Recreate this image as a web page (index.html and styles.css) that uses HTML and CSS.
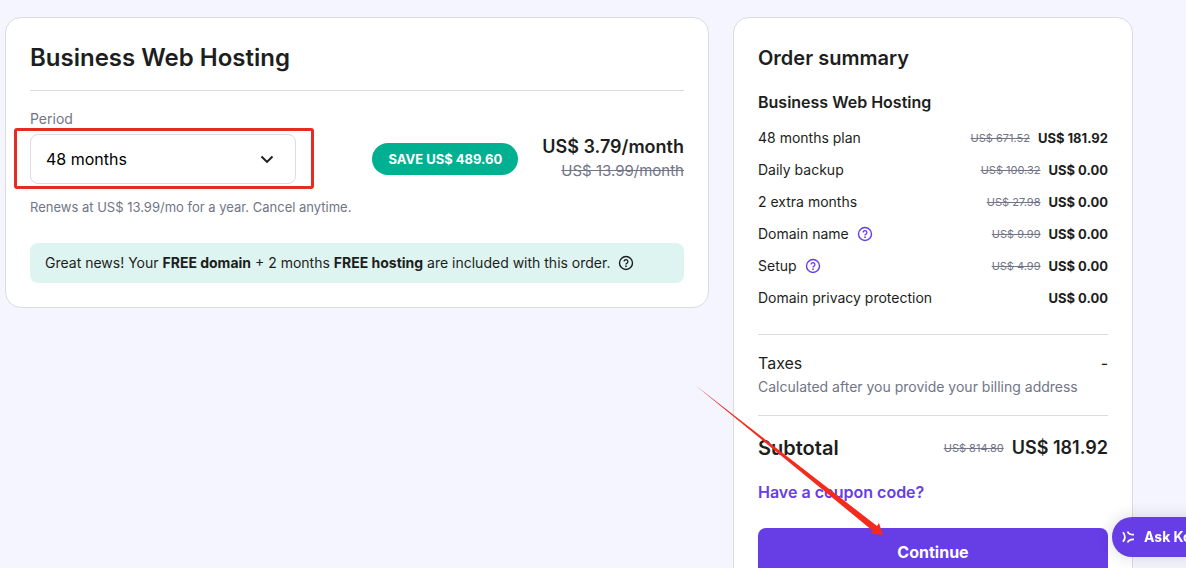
FILE: index.html
```html
<!DOCTYPE html>
<html lang="en">
<head>
<meta charset="utf-8">
<meta name="viewport" content="width=device-width, initial-scale=1">
<title>Business Web Hosting – Checkout</title>
<link rel="stylesheet" href="styles.css">
</head>
<body>
<svg class="symbols" aria-hidden="true">
  <symbol id="help" viewBox="0 0 16 16">
    <circle cx="8" cy="8" r="6.5" fill="none" stroke="currentColor" stroke-width="1.4"/>
    <path d="M6.100 6.500a1.900 1.900 0 1 1 2.900 1.600c-.7.4-1 .7-1 1.300" fill="none" stroke="currentColor" stroke-width="1.3"/>
    <circle cx="8" cy="11.2" r=".85" fill="currentColor"/>
  </symbol>
</svg>
<main class="checkout">
  <section class="card plan">
    <h1 class="plan-title">Business Web Hosting</h1>
    <label class="period-label" for="period">Period</label>
    <div class="period-row">
      <div class="period-field">
        <select class="period-select" id="period">
          <option>48 months</option>
          <option>24 months</option>
          <option>12 months</option>
          <option>1 month</option>
        </select>
        <svg class="chevron" viewBox="0 0 24 24" aria-hidden="true"><path d="M6 9.200l6 6 6-6" fill="none" stroke="currentColor" stroke-width="2.2"/></svg>
        <div class="highlight"></div>
      </div>
      <span class="save">SAVE US$ 489.60</span>
      <div class="price">
        <strong class="price-now">US$ 3.79/month</strong>
        <s class="price-old">US$ 13.99/month</s>
      </div>
    </div>
    <p class="renew">Renews at US$ 13.99/mo for a year. Cancel anytime.</p>
    <div class="notice">
      <p class="notice-text">Great news! Your <b>FREE domain</b> + 2 months <b>FREE hosting</b> are included with this order.</p>
      <button class="help" type="button" aria-label="About free domain"><svg class="help-icon"><use href="#help"/></svg></button>
    </div>
  </section>

  <aside class="card summary">
    <h2 class="summary-title">Order summary</h2>
    <h3 class="summary-plan">Business Web Hosting</h3>
    <ul class="items">
      <li class="item"><span class="item-name">48 months plan</span><s class="old">US$ 671.52</s><b class="amount">US$ 181.92</b></li>
      <li class="item"><span class="item-name">Daily backup</span><s class="old">US$ 100.32</s><b class="amount">US$ 0.00</b></li>
      <li class="item"><span class="item-name">2 extra months</span><s class="old">US$ 27.98</s><b class="amount">US$ 0.00</b></li>
      <li class="item"><span class="item-name">Domain name <button class="help violet" type="button" aria-label="About domain name"><svg class="help-icon"><use href="#help"/></svg></button></span><s class="old">US$ 9.99</s><b class="amount">US$ 0.00</b></li>
      <li class="item"><span class="item-name">Setup <button class="help violet" type="button" aria-label="About setup"><svg class="help-icon"><use href="#help"/></svg></button></span><s class="old">US$ 4.99</s><b class="amount">US$ 0.00</b></li>
      <li class="item"><span class="item-name">Domain privacy protection</span><b class="amount">US$ 0.00</b></li>
    </ul>
    <div class="taxes">
      <div class="taxes-row"><span>Taxes</span><span>-</span></div>
      <p class="taxes-note">Calculated after you provide your billing address</p>
    </div>
    <div class="subtotal">
      <span class="subtotal-label">Subtotal</span><s class="old">US$ 814.80</s><strong class="total">US$ 181.92</strong>
    </div>
    <a class="coupon" href="#coupon">Have a coupon code?</a>
    <button class="continue" type="button">Continue</button>
    <svg class="arrow" viewBox="0 0 190 152" aria-hidden="true"><path d="M1 0L183 141L185 138L189 150L176.500 148.500L179 146z" fill="#f42a1c"/></svg>
  </aside>
</main>
<button class="ask" type="button">
  <svg class="ask-icon" viewBox="0 0 16 16" aria-hidden="true"><g fill="none" stroke="currentColor" stroke-width="1.8"><path d="M3 3.200Q6.800 8 3 12.800"/><path d="M7.600 2.500Q8.800 6 14 5.700"/><path d="M7.600 13.500Q8.800 10 14 10.300"/></g></svg>
  <span>Ask Kodee</span>
</button>
</body>
</html>
```
FILE: styles.css
```css
* { box-sizing: border-box; margin: 0; }

body {
  height: 100vh;
  overflow: hidden;
  background: #f4f5ff;
  color: #1d1e20;
  font: 14px/24px Inter, "Open Sans", sans-serif;
}

button, select { font: inherit; }

.symbols { display: none; }

.checkout {
  display: grid;
  grid-template-columns: minmax(0, 1fr) 400px;
  align-items: start;
  gap: 24px;
  padding: 17px 53px 24px 5px;
}

.card {
  padding: 24px;
  border: 1px solid #dadce0;
  border-radius: 16px;
  background: #fff;
}

.plan-title {
  padding-bottom: 16px;
  border-bottom: 1px solid #dadce0;
  font-size: 24px;
  font-weight: 600;
  line-height: 32px;
}

.period-label {
  display: block;
  margin-top: 16px;
  color: #727586;
}

.period-row {
  display: flex;
  align-items: center;
  gap: 24px;
  margin-top: 3px;
}

.period-field {
  position: relative;
  width: 266px;
  margin-right: auto;
}

.period-select {
  display: block;
  width: 100%;
  height: 50px;
  padding: 0 48px 0 15px;
  border: 1px solid #dadce0;
  border-radius: 8px;
  background: #fff;
  color: #000;
  font-size: 16px;
  appearance: none;
}

.chevron {
  position: absolute;
  top: 14px;
  right: 18px;
  width: 22px;
  height: 22px;
  pointer-events: none;
}

.highlight {
  position: absolute;
  inset: -6px -18px -5px -16px;
  border: 3px solid #e32d24;
  border-radius: 3px;
  pointer-events: none;
}

.save {
  padding: 4px 16px;
  border-radius: 16px;
  background: #00b090;
  color: #fff;
  font-size: 13px;
  font-weight: 700;
}

.price {
  display: flex;
  flex-direction: column;
  align-items: flex-end;
}

.price-now { font-size: 18px; font-weight: 600; }
.price-old { color: #727586; font-size: 15px; }

.renew { margin-top: 11px; color: #727586; font-size: 13px; }

.notice {
  display: flex;
  align-items: center;
  gap: 8px;
  margin-top: 24px;
  padding: 8px 15px;
  border-radius: 8px;
  background: #def4f0;
}

.help {
  display: inline-flex;
  padding: 0;
  border: 0;
  background: none;
  color: inherit;
}

.help-icon { width: 16px; height: 16px; }
.violet { color: #673de6; }

.summary { position: relative; }

.summary-title {
  font-size: 20px;
  font-weight: 600;
  line-height: 32px;
}

.summary-plan {
  margin-top: 16px;
  font-size: 16px;
  font-weight: 600;
  line-height: 24px;
}

.items {
  display: grid;
  gap: 8px;
  margin-top: 12px;
  padding: 0 0 24px;
  border-bottom: 1px solid #dadce0;
  list-style: none;
}

.item, .subtotal {
  display: flex;
  align-items: center;
  gap: 8px;
}

.item-name {
  display: flex;
  align-items: center;
  gap: 8px;
  margin-right: auto;
}

.old { color: #727586; font-size: 11px; }
.amount { font-size: 13px; }

.taxes {
  padding: 16px 0;
  border-bottom: 1px solid #dadce0;
}

.taxes-row {
  display: flex;
  justify-content: space-between;
  font-size: 16px;
}

.taxes-note { color: #727586; }

.subtotal {
  margin-top: 16px;
  font-size: 20px;
  font-weight: 600;
  line-height: 32px;
}

.subtotal-label { margin-right: auto; }
.subtotal .old { font-weight: 400; }
.total { font-size: 18px; font-weight: 600; }

.coupon {
  display: block;
  margin-top: 16px;
  color: #673de6;
  font-size: 16px;
  font-weight: 600;
  text-decoration: none;
}

.continue {
  width: 100%;
  height: 48px;
  margin-top: 24px;
  border: 0;
  border-radius: 8px;
  background: #673de6;
  color: #fff;
  font-size: 16px;
  font-weight: 700;
}

.arrow {
  position: absolute;
  top: 367px;
  left: -40px;
  width: 190px;
  height: 152px;
  pointer-events: none;
}

.ask {
  position: fixed;
  right: -58px;
  bottom: 11px;
  display: flex;
  align-items: center;
  gap: 8px;
  width: 132px;
  height: 40px;
  padding: 0 8px;
  border: 0;
  border-radius: 20px;
  background: #673de6;
  box-shadow: 0 0 16px rgb(29 30 32 / 16%);
  color: #fff;
  font-weight: 700;
  white-space: nowrap;
}

.ask-icon { width: 16px; height: 16px; }
```
